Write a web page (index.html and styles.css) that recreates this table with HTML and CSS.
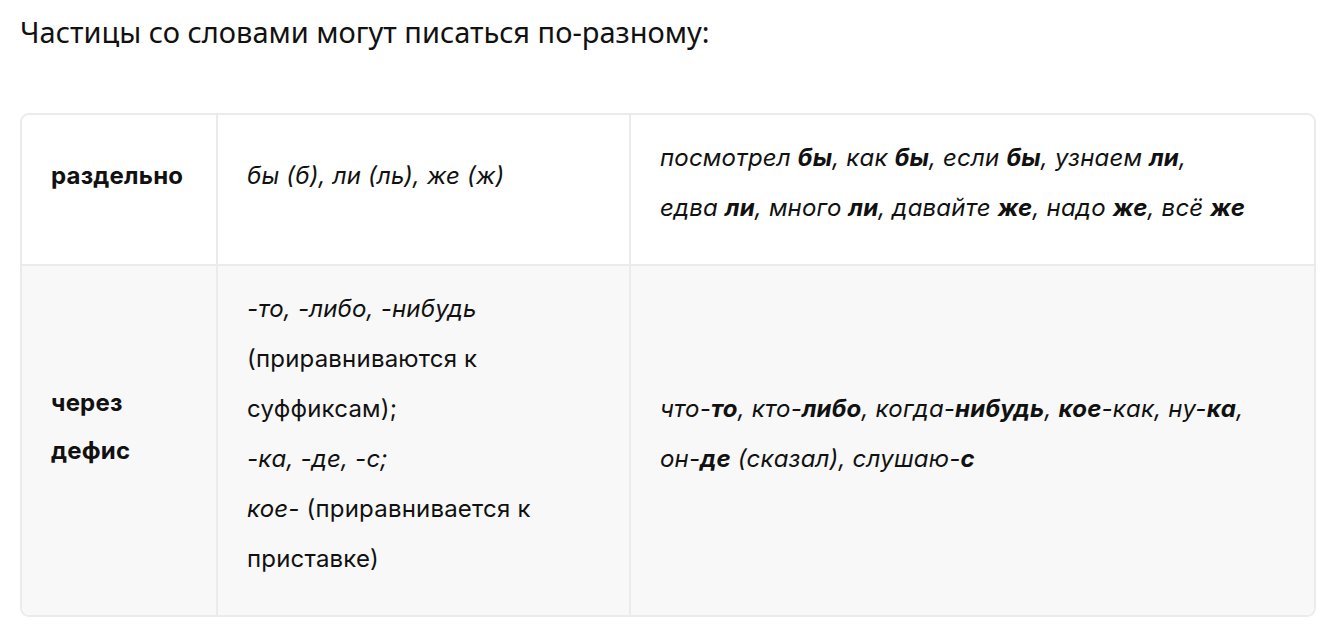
FILE: index.html
```html
<!DOCTYPE html>
<html lang="ru">
<head>
<meta charset="utf-8">
<link rel="stylesheet" href="styles.css">
</head>
<body>
<p class="lead">Частицы со словами могут писаться по-разному:</p>
<div class="tablewrap">
<table class="rules">
<colgroup><col class="c1"><col class="c2"><col class="c3"></colgroup>
<tr class="r1">
<td class="k"><span class="one">раздельно</span></td>
<td><span class="one"><i>бы (б), ли (ль), же (ж)</i></span></td>
<td><i>посмотрел <b>бы</b>, как <b>бы</b>, если <b>бы</b>, узнаем <b>ли</b>,<br>едва <b>ли</b>, много <b>ли</b>, давайте <b>же</b>, надо <b>же</b>, всё <b>же</b></i></td>
</tr>
<tr class="r2">
<td class="k"><span class="one">через<br>дефис</span></td>
<td><i>-то, -либо, -нибудь</i><br>(приравниваются к<br>суффиксам);<br><i>-ка, -де, -с;</i><br><i>кое-</i> (приравнивается к<br>приставке)</td>
<td><i>что-<b>то</b>, кто-<b>либо</b>, когда-<b>нибудь</b>, <b>кое</b>-как, ну-<b>ка</b>,<br>он-<b>де</b> (сказал), слушаю-<b>с</b></i></td>
</tr>
</table>
</div>
</body>
</html>
```
FILE: styles.css
```css
html, body { margin: 0; padding: 0; background: #fff; }
body { padding: 0 12px 0 20px; color: #000; }
.lead {
  margin: 0;
  padding-top: 13px;
  font-family: "Noto Sans", sans-serif;
  font-size: 29px;
  line-height: 38px;
  color: #111;
}
.tablewrap {
  margin-top: 62px;
  border: 2px solid #ebebeb;
  border-radius: 9px;
  overflow: hidden;
  width: 1292px;
}
.rules {
  width: 100%;
  border-collapse: collapse;
  font-family: "Inter", "Noto Sans", sans-serif;
  font-size: 24px;
  letter-spacing: 0.2px;
  line-height: 50px;
  color: #111;
}
.c1 { width: 195px; }
.c2 { width: 413px; }
.rules td {
  vertical-align: middle;
  padding: 18px 28px 31px 29px;
  border-left: 2px solid #ebebeb;
  white-space: nowrap;
}
.rules td:first-child { border-left: none; }
.r1 td { border-bottom: 2px solid #ebebeb; background: #fff; }
.r2 td { background: #f8f8f8; }
.rules td.k { font-weight: 700; }
.one { display: block; margin-bottom: 14px; }
.k .one { line-height: 48px; }
b { font-weight: 700; }
```
